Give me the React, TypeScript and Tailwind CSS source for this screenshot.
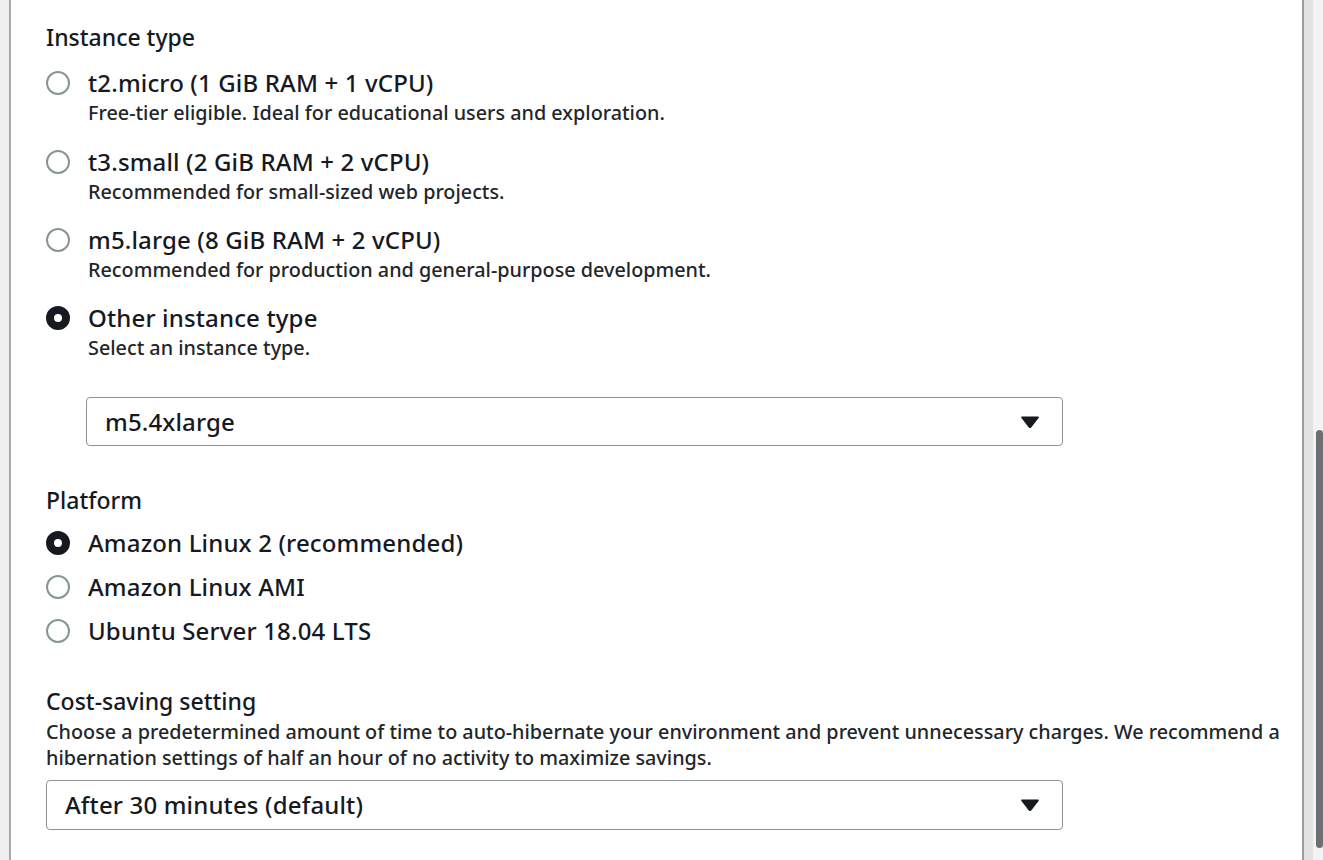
import React from "react";

const font = { fontFamily: '"Noto Sans", "Open Sans", Arial, sans-serif' };

function Radio({ checked }: { checked?: boolean }) {
  return checked ? (
    <span className="mt-[3px] box-border block h-[24px] w-[24px] shrink-0 rounded-full border-[8px] border-[#16191f] bg-white" />
  ) : (
    <span className="mt-[3px] box-border block h-[24px] w-[24px] shrink-0 rounded-full border-2 border-[#879596] bg-white" />
  );
}

function Option({ label, desc, checked }: { label: string; desc?: string; checked?: boolean }) {
  return (
    <div className="flex items-start gap-[18px]">
      <Radio checked={checked} />
      <div className="flex flex-col">
        <div className="text-[24px] leading-[30px] font-medium tracking-[0.15px] text-[#16191f]">{label}</div>
        {desc && <div className="mt-[3px] text-[19.8px] leading-[24px] font-medium text-[#232629]">{desc}</div>}
      </div>
    </div>
  );
}

function Caret() {
  return (
    <svg width="20" height="14" viewBox="0 0 20 14" className="shrink-0">
      <path d="M2 1.5 H18 Q19.5 1.5 18.6 2.9 L11.2 12.4 Q10 13.8 8.8 12.4 L1.4 2.9 Q0.5 1.5 2 1.5 Z" fill="#16191f" />
    </svg>
  );
}

function Select({ value, className }: { value: string; className: string }) {
  return (
    <div
      className={
        "flex items-center justify-between rounded-[4px] border border-[#8d9596] bg-white pl-[18px] pr-[22px] " +
        className
      }
    >
      <span className="text-[24px] leading-[30px] font-medium tracking-[0.15px] text-[#16191f]">{value}</span>
      <Caret />
    </div>
  );
}

export default function App() {
  return (
    <div className="flex h-[860px] w-[1323px] overflow-hidden bg-white" style={font}>
      <div className="w-[9px] shrink-0 bg-[#eeefee]" />
      <div className="w-[2px] shrink-0 bg-[#a7a9a9]" />

      <main className="flex min-w-0 flex-1 flex-col pl-[35px] pt-[23px]">
        <h2 className="text-[23px] leading-[28px] font-medium text-[#16191f]">Instance type</h2>
        <div className="mt-[17px] flex flex-col gap-[22px]">
          <Option label="t2.micro (1 GiB RAM + 1 vCPU)" desc="Free-tier eligible. Ideal for educational users and exploration." />
          <Option label="t3.small (2 GiB RAM + 2 vCPU)" desc="Recommended for small-sized web projects." />
          <div className="-mt-[1px]">
            <Option label="m5.large (8 GiB RAM + 2 vCPU)" desc="Recommended for production and general-purpose development." />
          </div>
          <div className="-mt-[1px]">
            <Option label="Other instance type" desc="Select an instance type." checked />
          </div>
        </div>
        <Select value="m5.4xlarge" className="ml-[40px] mt-[37px] h-[49px] w-[977px]" />

        <h2 className="mt-[40px] text-[23px] leading-[28px] font-medium text-[#16191f]">Platform</h2>
        <div className="mt-[14px] flex flex-col gap-[14px]">
          <Option label="Amazon Linux 2 (recommended)" checked />
          <Option label="Amazon Linux AMI" />
          <Option label="Ubuntu Server 18.04 LTS" />
        </div>

        <h2 className="mt-[41px] text-[23px] leading-[28px] font-medium text-[#16191f]">Cost-saving setting</h2>
        <p className="mt-[4px] whitespace-nowrap text-[19.8px] leading-[26px] font-medium text-[#232629]">
          Choose a predetermined amount of time to auto-hibernate your environment and prevent unnecessary charges. We recommend a
          <br />
          hibernation settings of half an hour of no activity to maximize savings.
        </p>
        <Select value="After 30 minutes (default)" className="mt-[9px] h-[50px] w-[1017px]" />
      </main>

      <div className="w-[2px] shrink-0 bg-[#9b9c9c]" />
      <div className="w-[9px] shrink-0 bg-[#e1e2e1]" />
      <div className="flex w-[10px] shrink-0 flex-col bg-[#f3f3f3] pb-[12px] pl-[3px] pt-[430px]">
        <div className="flex-1 rounded-full bg-[#6c7074]" />
      </div>
    </div>
  );
}
